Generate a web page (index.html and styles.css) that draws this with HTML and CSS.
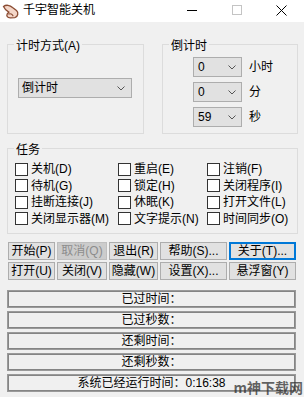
FILE: index.html
```html
<!DOCTYPE html>
<html lang="zh-CN">
<head>
  <meta charset="UTF-8">
  <title>千宇智能关机</title>
  <link rel="stylesheet" href="styles.css">
</head>
<body>
  <div class="window">
    <div class="titlebar">
      <svg class="app-icon" width="18" height="18" viewBox="0 0 18 18">
        <path d="M1.5 4.5 C4 2.5 8 3 10.5 5.5 L14.5 8.5 C16.8 10.5 16 14.8 12.8 15.6 L8.2 15.8 C5.4 15.8 4.2 13.8 5.2 12 L6.8 10.2 C4.8 9.2 2.8 7.4 1.5 4.5 Z" fill="#f4d6c8" stroke="#8a4b32" stroke-width="1.3"/>
        <path d="M6.4 12.2 C8.4 11.2 10.4 12.2 11.2 14.2" fill="none" stroke="#8a4b32" stroke-width="1.1"/>
      </svg>
      <span class="title">千宇智能关机</span>
      <div class="caption">
        <span class="cap-btn"><svg width="10" height="10" viewBox="0 0 10 10"><line x1="0" y1="5.5" x2="10" y2="5.5" stroke="#000" stroke-width="1"/></svg></span>
        <span class="cap-btn"><svg width="10" height="10" viewBox="0 0 10 10"><rect x="0.5" y="0.5" width="9" height="9" fill="none" stroke="#c4c4c4" stroke-width="1"/></svg></span>
        <span class="cap-btn"><svg width="11" height="11" viewBox="0 0 11 11"><path d="M0.5 0.5 L10.5 10.5 M10.5 0.5 L0.5 10.5" stroke="#000" stroke-width="1"/></svg></span>
      </div>
    </div>

    <div class="client">
      <div class="top-groups">
        <fieldset class="group group-mode">
          <legend>计时方式(A)</legend>
          <div class="combo combo-wide">
            <span>倒计时</span>
            <svg class="chev" width="8" height="5" viewBox="0 0 8 5"><polyline points="0.5,0.5 4,4 7.5,0.5" fill="none" stroke="#555" stroke-width="1"/></svg>
          </div>
        </fieldset>
        <fieldset class="group group-count">
          <legend>倒计时</legend>
          <div class="spin-row">
            <div class="combo combo-small">
              <span>0</span>
              <svg class="chev" width="8" height="5" viewBox="0 0 8 5"><polyline points="0.5,0.5 4,4 7.5,0.5" fill="none" stroke="#555" stroke-width="1"/></svg>
            </div>
            <span class="unit">小时</span>
          </div>
          <div class="spin-row">
            <div class="combo combo-small">
              <span>0</span>
              <svg class="chev" width="8" height="5" viewBox="0 0 8 5"><polyline points="0.5,0.5 4,4 7.5,0.5" fill="none" stroke="#555" stroke-width="1"/></svg>
            </div>
            <span class="unit">分</span>
          </div>
          <div class="spin-row">
            <div class="combo combo-small">
              <span>59</span>
              <svg class="chev" width="8" height="5" viewBox="0 0 8 5"><polyline points="0.5,0.5 4,4 7.5,0.5" fill="none" stroke="#555" stroke-width="1"/></svg>
            </div>
            <span class="unit">秒</span>
          </div>
        </fieldset>
      </div>

      <fieldset class="group group-tasks">
        <legend>任务</legend>
        <div class="task-grid">
          <label class="task"><input type="checkbox">关机(D)</label>
          <label class="task"><input type="checkbox">重启(E)</label>
          <label class="task"><input type="checkbox">注销(F)</label>
          <label class="task"><input type="checkbox">待机(G)</label>
          <label class="task"><input type="checkbox">锁定(H)</label>
          <label class="task"><input type="checkbox">关闭程序(I)</label>
          <label class="task"><input type="checkbox">挂断连接(J)</label>
          <label class="task"><input type="checkbox">休眠(K)</label>
          <label class="task"><input type="checkbox">打开文件(L)</label>
          <label class="task"><input type="checkbox">关闭显示器(M)</label>
          <label class="task"><input type="checkbox">文字提示(N)</label>
          <label class="task"><input type="checkbox">时间同步(O)</label>
        </div>
      </fieldset>

      <div class="buttons">
        <button>开始(P)</button>
        <button disabled>取消(Q)</button>
        <button>退出(R)</button>
        <button>帮助(S)...</button>
        <button class="default">关于(T)...</button>
        <button>打开(U)</button>
        <button>关闭(V)</button>
        <button>隐藏(W)</button>
        <button>设置(X)...</button>
        <button>悬浮窗(Y)</button>
      </div>

      <div class="status">
        <div class="status-box">已过时间：</div>
        <div class="status-box">已过秒数：</div>
        <div class="status-box">还剩时间：</div>
        <div class="status-box">还剩秒数：</div>
        <div class="status-box">系统已经运行时间：0:16:38</div>
      </div>
    </div>

    <div class="watermark">m神下载网</div>
  </div>
</body>
</html>
```

FILE: styles.css
```css
html, body {
  margin: 0;
  background: #f0f0f0;
}
body {
  font-family: "Liberation Sans", "Noto Sans CJK SC", sans-serif;
  font-size: 12px;
  color: #000;
}
.window {
  position: relative;
  width: 304px;
  height: 397px;
  overflow: hidden;
}
.titlebar {
  height: 22px;
  background: #fff;
  display: flex;
  align-items: center;
}
.app-icon {
  margin-left: 2px;
  margin-right: 3px;
}
.title {
  line-height: 14px;
  margin-top: -2px;
}
.caption {
  margin-left: auto;
  display: flex;
  height: 22px;
  margin-top: -2px;
}
.cap-btn {
  width: 45px;
  display: flex;
  align-items: center;
  justify-content: center;
}
.client {
  padding: 14px 6px 0 7px;
}
.top-groups {
  display: flex;
  gap: 18px;
}
.group {
  margin: 0;
  padding: 0 6px;
  min-width: 0;
  border: 1px solid #dcdcdc;
}
.group legend {
  padding: 4px 2px 0;
  line-height: 12px;
}
.group-mode {
  width: 137px;
  box-sizing: border-box;
  padding-top: 26px;
}
.group-count {
  width: 136px;
  box-sizing: border-box;
  padding-top: 5px;
  padding-bottom: 6px;
  display: flex;
  flex-direction: column;
  gap: 5px;
}
.combo {
  height: 20px;
  box-sizing: border-box;
  border: 1px solid #adadad;
  background: #e1e1e1;
  display: flex;
  align-items: center;
  justify-content: space-between;
  line-height: 18px;
}
.combo-wide {
  width: 114px;
  margin-left: 4px;
  padding: 0 6px 0 3px;
}
.combo-small {
  width: 49px;
  padding: 0 5px 0 4px;
}
.spin-row {
  display: flex;
  align-items: center;
  margin-left: 24px;
}
.unit {
  margin-left: 7px;
  line-height: 14px;
}
.group-tasks {
  margin-top: 6px;
  padding-top: 5px;
  padding-bottom: 6px;
}
.task-grid {
  display: grid;
  grid-template-columns: 103px 89px 1fr;
  grid-auto-rows: 16.5px;
  margin-left: 1px;
}
.task {
  display: flex;
  align-items: center;
  white-space: nowrap;
  line-height: 14px;
}
.task input {
  appearance: none;
  -webkit-appearance: none;
  width: 13px;
  height: 13px;
  margin: 0 3px 0 0;
  border: 1px solid #333;
  background: #fff;
  border-radius: 0;
}
.buttons {
  display: grid;
  grid-template-columns: 47px 50px 49px 67px 1fr;
  grid-auto-rows: 18px;
  gap: 2px;
  margin: 8px 2px 0 1px;
}
.buttons button {
  font: inherit;
  font-size: 12px;
  line-height: 14px;
  padding: 0;
  border: 1px solid #adadad;
  background: #e1e1e1;
  color: #000;
  white-space: nowrap;
}
.buttons button:disabled {
  background: #cccccc;
  border-color: #bfbfbf;
  color: #8c8c8c;
}
.buttons button.default {
  border-color: #0078d7;
  box-shadow: inset 0 0 0 1px #0078d7;
}
.status {
  margin: 10px 2px 0 0;
  display: flex;
  flex-direction: column;
  gap: 3px;
}
.status-box {
  height: 18px;
  box-sizing: border-box;
  border: 1px solid #9a9a9a;
  box-shadow: inset 0 0 0 1px #858585;
  display: flex;
  align-items: center;
  justify-content: center;
  line-height: 14px;
}
.watermark {
  position: absolute;
  right: 1px;
  bottom: 0;
  font-family: "Noto Sans CJK SC", sans-serif;
  font-size: 14px;
  font-weight: bold;
  line-height: 20px;
  color: rgba(50, 50, 50, 0.75);
}
```
